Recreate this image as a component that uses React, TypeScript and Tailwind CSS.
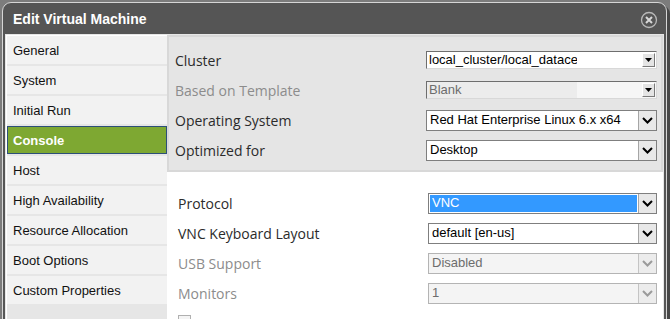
const NAV = [
  'General',
  'System',
  'Initial Run',
  'Console',
  'Host',
  'High Availability',
  'Resource Allocation',
  'Boot Options',
  'Custom Properties',
];

function Chevron({ color = '#000' }: { color?: string }) {
  return (
    <svg width="11" height="7" viewBox="0 0 11 7">
      <path d="M1 1l4.5 4.5L10 1" stroke={color} strokeWidth="2" fill="none" />
    </svg>
  );
}

// old style combo with small arrow button
function ClassicSelect({ value, disabled }: { value: string; disabled?: boolean }) {
  return (
    <div
      className={`flex h-[18px] w-[231px] items-center border border-t-[#6e6e6e] border-l-[#6e6e6e] border-r-[#d8d8d8] border-b-[#d8d8d8] ${
        disabled ? 'bg-[#f6f6f6]' : 'bg-white'
      }`}
    >
      <div className="flex h-full flex-1">
        <span
          className={`flex h-full w-[150px] items-center overflow-hidden whitespace-nowrap pl-[2px] text-[13px] ${
            disabled ? 'bg-[#ececec] text-[#6d6d6d]' : 'text-black'
          }`}
        >
          {value}
        </span>
      </div>
      <div className="mr-px flex h-[14px] w-[13px] items-center justify-center border border-t-white border-l-white border-r-[#7a7a7a] border-b-[#7a7a7a] bg-[#e4e4e4]">
        <svg width="7" height="4" viewBox="0 0 7 4">
          <path d="M0 0h7L3.5 4z" fill="#000" />
        </svg>
      </div>
    </div>
  );
}

function Select({
  value,
  disabled,
  selected,
  wide,
}: {
  value: string;
  disabled?: boolean;
  selected?: boolean;
  wide?: boolean;
}) {
  return (
    <div
      className={`flex h-[21px] border ${wide ? 'w-[231px]' : 'w-[229px]'} ${
        disabled ? 'border-[#b4b4b4] bg-[#f4f4f4]' : 'border-[#7f7f7f] bg-white'
      }`}
    >
      <div className="flex flex-1 p-px">
        <span
          className={`flex flex-1 items-center whitespace-nowrap pl-[2px] text-[13px] ${
            selected ? 'bg-[#3399ff] text-white' : disabled ? 'text-[#6d6d6d]' : 'text-black'
          }`}
        >
          {value}
        </span>
      </div>
      <div
        className={`flex w-[18px] items-center justify-center border-l ${
          disabled ? 'border-[#c4c4c4] bg-[#ececec]' : 'border-[#a6a6a6] bg-[#e8e8e8]'
        }`}
      >
        <Chevron color={disabled ? '#9a9a9a' : '#000'} />
      </div>
    </div>
  );
}

function Row({
  label,
  dim,
  top,
  children,
}: {
  label: string;
  dim?: boolean;
  top?: boolean;
  children: React.ReactNode;
}) {
  return (
    <div className="flex h-[30px] items-center">
      <span
        className={`${top ? 'w-[251px]' : 'w-[250px]'} font-['Open_Sans',sans-serif] text-[14px] ${
          dim ? 'text-[#8c8c8c]' : 'text-[#2b2b2b]'
        }`}
      >
        {label}
      </span>
      {children}
    </div>
  );
}

export default function App() {
  return (
    <div className="relative h-[319px] w-[670px] overflow-hidden bg-[#7c7c7c] font-['Liberation_Sans',Arial,sans-serif]">
      {/* dialog frame */}
      <div className="absolute left-[2px] top-[2px] flex h-[340px] w-[665px] flex-col rounded-t-[9px] border border-[#d6d6d6] bg-[#555] px-[2px] shadow-[3px_3px_0_#474747]">
        {/* title bar */}
        <div className="flex h-[31px] shrink-0 items-center justify-between pl-[8px] pr-[6px]">
          <span className="pt-[2px] text-[14px] font-bold text-white">Edit Virtual Machine</span>
          <svg width="18" height="18" viewBox="0 0 18 18" className="mt-[2px]">
            <circle cx="9" cy="9" r="7.5" stroke="#b8b8b8" strokeWidth="1.3" fill="none" />
            <path d="M6 6l6 6M12 6l-6 6" stroke="#d8d8d8" strokeWidth="2" />
          </svg>
        </div>

        {/* body */}
        <div className="flex flex-1 border border-[#e6e6e6] bg-white pl-px">
          {/* side tabs */}
          <div className="mt-px flex w-[160px] flex-col gap-[2px] bg-[#e6e6e6]">
            {NAV.map((item) =>
              item === 'Console' ? (
                <div
                  key={item}
                  className="flex h-[28px] items-center border border-[#2d4f78] bg-[#7ea832] pl-[5px] pt-[2px] text-[13px] font-bold text-white"
                >
                  {item}
                </div>
              ) : (
                <div
                  key={item}
                  className="flex h-[28px] items-center bg-[#f2f2f2] pl-[6px] pt-[2px] text-[13px] text-[#111]"
                >
                  {item}
                </div>
              )
            )}
          </div>

          {/* content */}
          <div className="flex flex-1 flex-col">
            <div className="flex flex-col border-2 border-[#d8d8d8] bg-[#e5e5e5] pb-[5px] pl-[6px] pt-[8px]">
              <Row label="Cluster" top>
                <ClassicSelect value="local_cluster/local_datacenter" />
              </Row>
              <Row label="Based on Template" dim top>
                <ClassicSelect value="Blank" disabled />
              </Row>
              <Row label="Operating System" top>
                <Select value="Red Hat Enterprise Linux 6.x x64" wide />
              </Row>
              <Row label="Optimized for" top>
                <Select value="Desktop" wide />
              </Row>
            </div>

            <div className="flex flex-col pl-[11px] pt-[16px]">
              <Row label="Protocol">
                <Select value="VNC" selected />
              </Row>
              <Row label="VNC Keyboard Layout">
                <Select value="default [en-us]" />
              </Row>
              <Row label="USB Support" dim>
                <Select value="Disabled" disabled />
              </Row>
              <Row label="Monitors" dim>
                <Select value="1" disabled />
              </Row>
              <div className="flex h-[30px] items-start pt-[7px]">
                <div className="h-[13px] w-[13px] border border-[#b0b0b0] bg-[#f4f4f4]" />
              </div>
            </div>
          </div>
        </div>
      </div>
    </div>
  );
}
